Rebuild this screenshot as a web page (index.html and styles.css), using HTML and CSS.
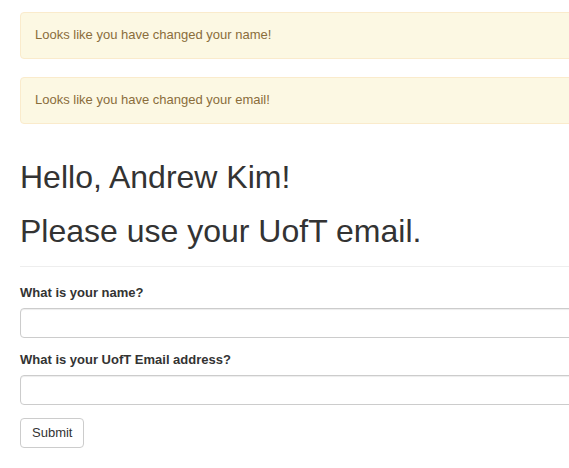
FILE: index.html
```html
<!DOCTYPE html>
<html lang="en">
<head>
<meta charset="utf-8">
<title>Hello</title>
<meta name="viewport" content="width=device-width, initial-scale=1">
<link rel="stylesheet" href="styles.css">
</head>
<body>
<main class="container">
  <div class="alert">Looks like you have changed your name!</div>
  <div class="alert">Looks like you have changed your email!</div>
  <header class="page-header">
    <h1>Hello, Andrew Kim!</h1>
    <h1>Please use your UofT email.</h1>
  </header>
  <form class="form">
    <div class="form-group">
      <label for="name">What is your name?</label>
      <input class="form-control" id="name" name="name" type="text">
    </div>
    <div class="form-group">
      <label for="email">What is your UofT Email address?</label>
      <input class="form-control" id="email" name="email" type="text">
    </div>
    <button class="btn" type="submit">Submit</button>
  </form>
</main>
</body>
</html>
```

FILE: styles.css
```css
* {
  box-sizing: border-box;
}

body {
  margin: 0;
  overflow-x: hidden;
  background: #fff;
  color: #333;
  font-family: "Liberation Sans", Arial, sans-serif;
  font-size: 13px;
  line-height: 18px;
}

/* The right side runs past the window edge. */
.container {
  margin-right: -20px;
  padding: 12px 0 20px 20px;
}

.alert {
  margin-bottom: 18px;
  padding: 13px 14px 14px;
  border: 1px solid #faebcc;
  border-radius: 4px;
  background: #fcf8e3;
  color: #8a6d3b;
}

.page-header {
  margin: 35px 0 17px;
  padding-bottom: 17px;
  border-bottom: 1px solid #eee;
}

h1 {
  margin: 0 0 18px;
  font-size: 32px;
  font-weight: 500;
  line-height: 36px;
}

h1:last-child {
  margin-bottom: 0;
}

.form-group {
  margin-bottom: 13px;
}

label {
  display: block;
  margin-bottom: 6px;
  font-weight: 700;
}

.form-control {
  display: block;
  width: 100%;
  height: 30px;
  padding: 5px 11px;
  border: 1px solid #ccc;
  border-radius: 4px;
  background: #fff;
  box-shadow: inset 0 1px 1px rgba(0, 0, 0, 0.075);
  color: #555;
  font: inherit;
}

.btn {
  padding: 5px 11px;
  border: 1px solid #ccc;
  border-radius: 4px;
  background: #fff;
  color: #333;
  font: inherit;
  cursor: pointer;
}
```
